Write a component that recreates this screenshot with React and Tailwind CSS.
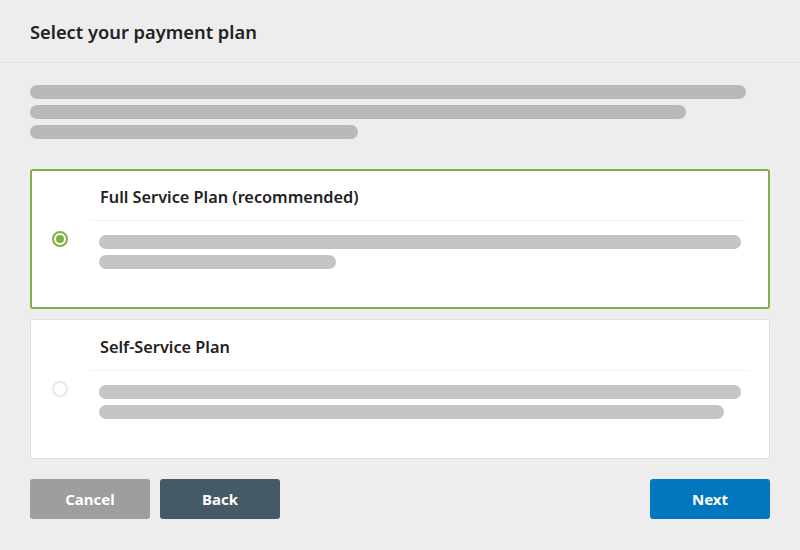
import React, { useState } from 'react';

const plans = [
  { id: 'full', title: 'Full Service Plan (recommended)', bars: ['w-[642px]', 'w-[237px]'] },
  { id: 'self', title: 'Self-Service Plan', bars: ['w-[642px]', 'w-[625px]'] },
];

const Radio = ({ checked }) => (
  <div
    className={
      checked
        ? 'w-4 h-4 rounded-full border-2 border-[#7cb342] bg-white flex items-center justify-center'
        : 'w-4 h-4 rounded-full border-2 border-[#e8e8e8] bg-white'
    }
  >
    {checked && <div className="w-2 h-2 rounded-full bg-[#7cb342]" />}
  </div>
);

const PlanCard = ({ plan, selected, onSelect }) => (
  <div
    onClick={onSelect}
    className={
      selected
        ? 'h-[140px] flex bg-white rounded-[3px] border-2 border-[#7cb342] cursor-pointer'
        : 'h-[140px] flex bg-white rounded-[3px] border border-[#dedede] p-px cursor-pointer'
    }
  >
    {/* radio column */}
    <div className="w-[58px] pl-5 flex items-center">
      <Radio checked={selected} />
    </div>
    <div className="w-[658px] flex flex-col">
      <div className="h-[49px] flex items-center pl-[10px] pt-[3px] text-[16.3px] font-semibold text-[#222]">
        {plan.title}
      </div>
      <div className="h-px bg-[#f3f3f3]" />
      <div className="pt-[14px] pl-[9px] flex flex-col gap-[6px]">
        {plan.bars.map((w, i) => (
          <div key={i} className={`${w} h-[14px] rounded-full bg-[#c4c4c4]`} />
        ))}
      </div>
    </div>
  </div>
);

export default function App() {
  const [selected, setSelected] = useState('full');

  return (
    <div
      className="w-[800px] h-[550px] bg-[#ededed] text-[#222]"
      style={{ fontFamily: '"Noto Sans", "Open Sans", sans-serif' }}
    >
      <div className="h-[63px] border-b border-[#e2e2e2] px-[30px] flex items-center">
        <h1 className="text-[18.3px] font-semibold text-[#222] pt-[2px]">Select your payment plan</h1>
      </div>

      <div className="px-[30px] pt-[22px]">
        {/* intro placeholder text */}
        <div className="flex flex-col gap-[6px]">
          <div className="w-[716px] h-[14px] rounded-full bg-[#b9b9b9]" />
          <div className="w-[656px] h-[14px] rounded-full bg-[#b9b9b9]" />
          <div className="w-[328px] h-[14px] rounded-full bg-[#b9b9b9]" />
        </div>

        <div className="mt-[30px] flex flex-col gap-[10px]">
          {plans.map((p) => (
            <PlanCard key={p.id} plan={p} selected={selected === p.id} onSelect={() => setSelected(p.id)} />
          ))}
        </div>

        <div className="mt-5 flex items-center gap-[10px]">
          <button className="w-[120px] h-10 rounded-[3px] bg-[#9e9e9e] text-white text-[15px] font-bold">
            Cancel
          </button>
          <button className="w-[120px] h-10 rounded-[3px] bg-[#455a64] text-white text-[15px] font-bold">
            Back
          </button>
          <button className="ml-auto w-[120px] h-10 rounded-[3px] bg-[#0277bd] text-white text-[15px] font-bold">
            Next
          </button>
        </div>
      </div>
    </div>
  );
}
